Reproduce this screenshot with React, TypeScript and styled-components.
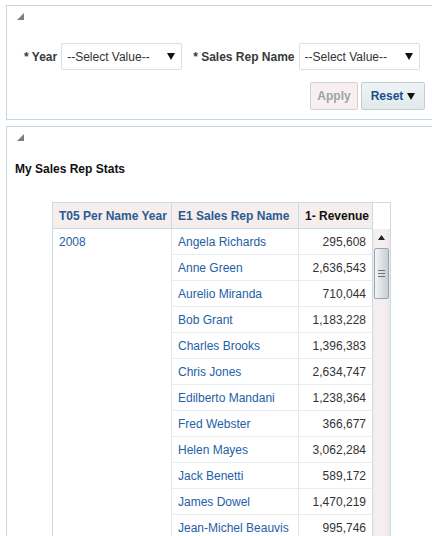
import React from "react";
import styled, { createGlobalStyle } from "styled-components";

const Global = createGlobalStyle`
  html, body { margin: 0; padding: 0; background: #ffffff; }
  body { font-family: "Liberation Sans", Arial, sans-serif; font-size: 12px; color: #333; overflow: hidden; }
`;

const Page = styled.div`
  width: 432px;
  height: 536px;
  overflow: hidden;
  padding: 5px 0 0 6px;
  box-sizing: border-box;
`;

const Panel = styled.section<{ $h?: number }>`
  width: 440px;
  box-sizing: border-box;
  border: 1px solid #c5d5df;
  ${(p) => (p.$h ? `height: ${p.$h}px;` : "height: 600px;")}
  padding: 7px 0 0 10px;
  margin-bottom: 6px;
`;

const Collapse = styled.svg`
  display: block;
  width: 7px;
  height: 7px;
`;

const Form = styled.div`
  width: 401px;
  padding: 23px 0 0 7px;
`;

const FilterRow = styled.div`
  display: flex;
  align-items: center;
`;

const Label = styled.label<{ $gap?: number }>`
  font-weight: bold;
  color: #3a3a3a;
  margin-left: ${(p) => p.$gap ?? 0}px;
  margin-right: 4px;
  white-space: nowrap;
`;

const Select = styled.div`
  width: 121px;
  height: 27px;
  box-sizing: border-box;
  border: 1px solid #d9e0e4;
  border-radius: 2px;
  display: flex;
  align-items: center;
  justify-content: space-between;
  padding: 0 6px 0 5px;
  color: #333;
  background: #fff;
`;

const DownArrow = styled.svg<{ $ml?: number }>`
  display: block;
  width: 8px;
  height: 7px;
  margin-left: ${(p) => p.$ml ?? 0}px;
`;

const Buttons = styled.div`
  display: flex;
  justify-content: flex-end;
  gap: 3px;
  margin-top: 12px;
`;

const Button = styled.button<{ $disabled?: boolean }>`
  height: 28px;
  box-sizing: border-box;
  display: flex;
  align-items: center;
  justify-content: center;
  font-family: "Liberation Sans", Arial, sans-serif;
  font-size: 12px;
  font-weight: bold;
  border-radius: 2px;
  border: 1px solid ${(p) => (p.$disabled ? "#d6cfcf" : "#c3cdd2")};
  background: ${(p) =>
    p.$disabled ? "#f8f0f0" : "linear-gradient(#eef4f4, #e1e9eb)"};
  color: ${(p) => (p.$disabled ? "#9ca3a8" : "#1d4e8c")};
  padding: 0 6px;
  cursor: pointer;
`;

const Title = styled.h2`
  margin: 21px 0 0 -2px;
  font-size: 12px;
  font-weight: bold;
  color: #111;
  line-height: 14px;
`;

const Table = styled.table`
  margin: 26px 0 0 35px;
  border-collapse: collapse;
  table-layout: fixed;
  width: 339px;
  border: 1px solid #c9dbe6;
`;

const Th = styled.th<{ $dark?: boolean; $blank?: boolean; $right?: boolean }>`
  height: 26px;
  padding: 0 6px;
  box-sizing: border-box;
  font-weight: bold;
  font-size: 12px;
  text-align: ${(p) => (p.$right ? "right" : "left")};
  white-space: nowrap;
  color: ${(p) => (p.$dark ? "#111" : "#2a5b94")};
  background: ${(p) => (p.$blank ? "#fff" : "#f6eded")};
  border: 1px solid #c9dbe6;
  ${(p) => (p.$blank ? "border-bottom: none;" : "")}
`;

const Td = styled.td<{ $num?: boolean; $year?: boolean }>`
  height: 26px;
  padding: 0 6px;
  box-sizing: border-box;
  white-space: nowrap;
  vertical-align: ${(p) => (p.$year ? "top" : "middle")};
  text-align: ${(p) => (p.$num ? "right" : "left")};
  color: ${(p) => (p.$num ? "#333" : "#2460a7")};
  border-bottom: 1px solid #e7ecef;
  border-right: 1px solid ${(p) => (p.$num ? "#c9dbe6" : "#e2e8ec")};
  ${(p) => (p.$year ? "padding-top: 6px; border-bottom: none;" : "")}
`;

const ScrollCell = styled.td`
  padding: 0;
  vertical-align: top;
  background: linear-gradient(to right, #f3efef, #f5eeee 60%, #ece7e7);
`;

const ScrollInner = styled.div`
  display: flex;
  flex-direction: column;
  align-items: center;
  padding-top: 6px;
`;

const UpArrow = styled.svg`
  width: 7px;
  height: 5px;
  display: block;
`;

const Thumb = styled.div`
  margin-top: 8px;
  width: 15px;
  height: 51px;
  box-sizing: border-box;
  border: 1px solid #9aa6ae;
  border-radius: 2px;
  background: linear-gradient(to right, #f4f5f6, #dde1e4 50%, #c8ced2);
  display: flex;
  flex-direction: column;
  align-items: center;
  justify-content: center;
  gap: 2px;
`;

const Grip = styled.span`
  display: block;
  width: 7px;
  height: 1px;
  background: #6d7478;
`;

const rows: [string, string][] = [
  ["Angela Richards", "295,608"],
  ["Anne Green", "2,636,543"],
  ["Aurelio Miranda", "710,044"],
  ["Bob Grant", "1,183,228"],
  ["Charles Brooks", "1,396,383"],
  ["Chris Jones", "2,634,747"],
  ["Edilberto Mandani", "1,238,364"],
  ["Fred Webster", "366,677"],
  ["Helen Mayes", "3,062,284"],
  ["Jack Benetti", "589,172"],
  ["James Dowel", "1,470,219"],
  ["Jean-Michel Beauvis", "995,746"],
];

const Tri = () => (
  <Collapse viewBox="0 0 7 7">
    <polygon points="7,0 7,7 0,7" fill="#7a7f84" />
  </Collapse>
);

const Down = ({ ml }: { ml?: number }) => (
  <DownArrow $ml={ml} viewBox="0 0 8 7">
    <polygon points="0,0 8,0 4,7" fill="#111" />
  </DownArrow>
);

export default function App() {
  return (
    <>
      <Global />
      <Page>
        <Panel $h={115}>
          <Tri />
          <Form>
            <FilterRow>
              <Label>* Year</Label>
              <Select>
                <span>--Select Value--</span>
                <Down />
              </Select>
              <Label $gap={11}>* Sales Rep Name</Label>
              <Select>
                <span>--Select Value--</span>
                <Down />
              </Select>
            </FilterRow>
            <Buttons>
              <Button $disabled style={{ width: 48 }}>Apply</Button>
              <Button style={{ width: 64 }}>
                Reset
                <Down ml={4} />
              </Button>
            </Buttons>
          </Form>
        </Panel>
        <Panel>
          <Tri />
          <Title>My Sales Rep Stats</Title>
          <Table>
            <colgroup>
              <col style={{ width: 119 }} />
              <col style={{ width: 127 }} />
              <col style={{ width: 74 }} />
              <col style={{ width: 18 }} />
            </colgroup>
            <thead>
              <tr>
                <Th>T05 Per Name Year</Th>
                <Th>E1 Sales Rep Name</Th>
                <Th $dark $right>1- Revenue</Th>
                <Th $blank />
              </tr>
            </thead>
            <tbody>
              {rows.map(([name, rev], i) => (
                <tr key={name}>
                  {i === 0 && (
                    <Td $year rowSpan={rows.length}>2008</Td>
                  )}
                  <Td>{name}</Td>
                  <Td $num>{rev}</Td>
                  {i === 0 && (
                    <ScrollCell rowSpan={rows.length}>
                      <ScrollInner>
                        <UpArrow viewBox="0 0 7 5">
                          <polygon points="3.5,0 7,5 0,5" fill="#222" />
                        </UpArrow>
                        <Thumb>
                          <Grip />
                          <Grip />
                          <Grip />
                        </Thumb>
                      </ScrollInner>
                    </ScrollCell>
                  )}
                </tr>
              ))}
            </tbody>
          </Table>
        </Panel>
      </Page>
    </>
  );
}
